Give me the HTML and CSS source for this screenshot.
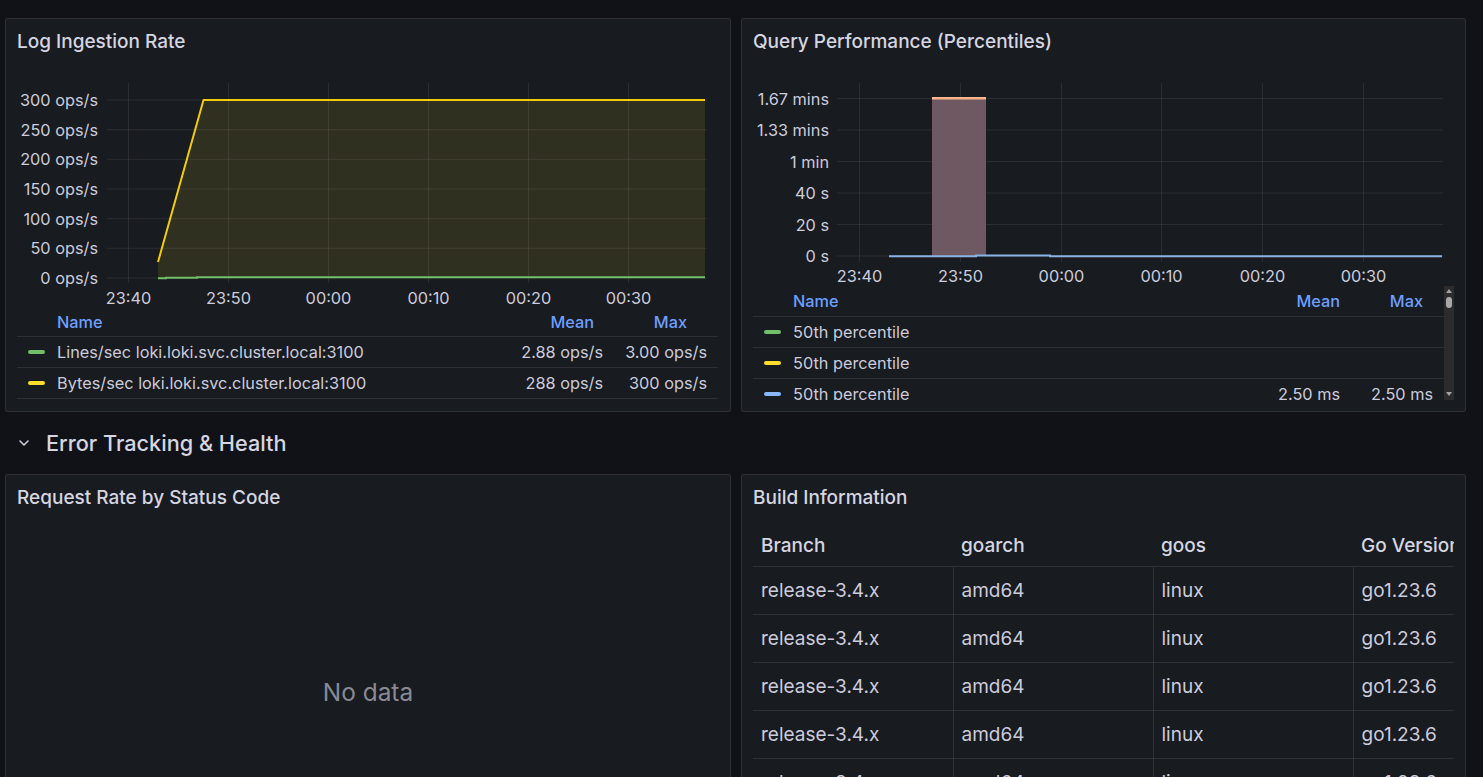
FILE: index.html
```html
<!DOCTYPE html>
<html>
<head>
<meta charset="utf-8">
<link rel="stylesheet" href="styles.css">
</head>
<body>
<div class="dash">
  <div class="grid">
    <section class="panel p-top">
      <header class="ph"><h2 class="title">Log Ingestion Rate</h2></header>
      <svg class="chart" width="724" height="244" viewBox="6 64 724 244">
        <g class="grid-lines">
          <line x1="107" x2="707" y1="100" y2="100"/>
          <line x1="107" x2="707" y1="129.7" y2="129.7"/>
          <line x1="107" x2="707" y1="159.3" y2="159.3"/>
          <line x1="107" x2="707" y1="189" y2="189"/>
          <line x1="107" x2="707" y1="218.7" y2="218.7"/>
          <line x1="107" x2="707" y1="248.3" y2="248.3"/>
          <line x1="107" x2="707" y1="278" y2="278"/>
          <line x1="128.5" x2="128.5" y1="83" y2="283"/>
          <line x1="228.5" x2="228.5" y1="83" y2="283"/>
          <line x1="328.5" x2="328.5" y1="83" y2="283"/>
          <line x1="428.5" x2="428.5" y1="83" y2="283"/>
          <line x1="528.5" x2="528.5" y1="83" y2="283"/>
          <line x1="628.5" x2="628.5" y1="83" y2="283"/>
        </g>
        <g class="ylab">
          <text x="98" y="100">300 ops/s</text>
          <text x="98" y="129.7">250 ops/s</text>
          <text x="98" y="159.3">200 ops/s</text>
          <text x="98" y="189">150 ops/s</text>
          <text x="98" y="218.7">100 ops/s</text>
          <text x="98" y="248.3">50 ops/s</text>
          <text x="98" y="278">0 ops/s</text>
        </g>
        <g class="xlab">
          <text x="128.5" y="298">23:40</text>
          <text x="228.5" y="298">23:50</text>
          <text x="328.5" y="298">00:00</text>
          <text x="428.5" y="298">00:10</text>
          <text x="528.5" y="298">00:20</text>
          <text x="628.5" y="298">00:30</text>
        </g>
        <polygon class="yfill" points="158,262 203.5,100 705,100 705,278 158,278"/>
        <polyline class="yline" points="158,262 203.5,100 705,100"/>
        <polyline class="gline" points="158,278.3 166,278.3 166,277.8 197,277.8 197,277.2 705,277.2"/>
      </svg>
      <div class="legend lg1">
        <div class="lrow lhead">
          <span class="lname">Name</span>
          <span class="lmean">Mean</span>
          <span class="lmax">Max</span>
        </div>
        <div class="lrow">
          <span class="lname"><i class="mk mk-green"></i>Lines/sec loki.loki.svc.cluster.local:3100</span>
          <span class="lmean">2.88 ops/s</span>
          <span class="lmax">3.00 ops/s</span>
        </div>
        <div class="lrow lrow-last">
          <span class="lname"><i class="mk mk-yellow"></i>Bytes/sec loki.loki.svc.cluster.local:3100</span>
          <span class="lmean">288 ops/s</span>
          <span class="lmax">300 ops/s</span>
        </div>
      </div>
    </section>

    <section class="panel p-top">
      <header class="ph"><h2 class="title">Query Performance (Percentiles)</h2></header>
      <svg class="chart" width="724" height="222" viewBox="742 64 724 222">
        <g class="grid-lines">
          <line x1="837" x2="1443" y1="98.5" y2="98.5"/>
          <line x1="837" x2="1443" y1="130" y2="130"/>
          <line x1="837" x2="1443" y1="161.5" y2="161.5"/>
          <line x1="837" x2="1443" y1="193" y2="193"/>
          <line x1="837" x2="1443" y1="224.5" y2="224.5"/>
          <line x1="837" x2="1443" y1="256" y2="256"/>
          <line x1="859.5" x2="859.5" y1="83" y2="262"/>
          <line x1="960.5" x2="960.5" y1="83" y2="262"/>
          <line x1="1061.5" x2="1061.5" y1="83" y2="262"/>
          <line x1="1161.5" x2="1161.5" y1="83" y2="262"/>
          <line x1="1262.5" x2="1262.5" y1="83" y2="262"/>
          <line x1="1363.5" x2="1363.5" y1="83" y2="262"/>
        </g>
        <g class="ylab">
          <text x="829" y="98.5">1.67 mins</text>
          <text x="829" y="130">1.33 mins</text>
          <text x="829" y="161.5">1 min</text>
          <text x="829" y="193">40 s</text>
          <text x="829" y="224.5">20 s</text>
          <text x="829" y="256">0 s</text>
        </g>
        <g class="xlab">
          <text x="859.5" y="276">23:40</text>
          <text x="960.5" y="276">23:50</text>
          <text x="1061.5" y="276">00:00</text>
          <text x="1161.5" y="276">00:10</text>
          <text x="1262.5" y="276">00:20</text>
          <text x="1363.5" y="276">00:30</text>
        </g>
        <rect class="bar" x="932" y="97.5" width="54" height="158.5"/>
        <rect class="bar-top" x="932" y="97" width="54" height="2.5"/>
        <polyline class="bline" points="889,256.3 976,256.3 976,255.5 1050,255.5 1050,256.3 1442,256.3"/>
      </svg>
      <div class="lwrap">
        <div class="legend lg2">
          <div class="lrow lhead">
            <span class="lname">Name</span>
            <span class="lmean">Mean</span>
            <span class="lmax">Max</span>
          </div>
          <div class="lrow">
            <span class="lname"><i class="mk mk-green"></i>50th percentile</span>
            <span class="lmean"></span>
            <span class="lmax"></span>
          </div>
          <div class="lrow">
            <span class="lname"><i class="mk mk-yellow"></i>50th percentile</span>
            <span class="lmean"></span>
            <span class="lmax"></span>
          </div>
          <div class="lrow">
            <span class="lname"><i class="mk mk-blue"></i>50th percentile</span>
            <span class="lmean">2.50 ms</span>
            <span class="lmax">2.50 ms</span>
          </div>
          <div class="lrow">
            <span class="lname"><i class="mk mk-red"></i>90th percentile</span>
            <span class="lmean"></span>
            <span class="lmax"></span>
          </div>
        </div>
        <div class="sbar">
          <span class="sb-up"></span>
          <span class="sb-thumb"></span>
          <span class="sb-down"></span>
        </div>
      </div>
    </section>
  </div>

  <div class="row-title">
    <svg class="chev" width="10" height="6" viewBox="0 0 10 6"><path d="M1 1 L5 5 L9 1"/></svg>
    <h1 class="row-name">Error Tracking &amp; Health</h1>
  </div>

  <div class="grid">
    <section class="panel p-bot">
      <header class="ph"><h2 class="title">Request Rate by Status Code</h2></header>
      <div class="nodata">No data</div>
    </section>
    <section class="panel p-bot">
      <header class="ph"><h2 class="title">Build Information</h2></header>
      <div class="twrap">
        <table class="btable">
          <thead>
            <tr><th>Branch</th><th>goarch</th><th>goos</th><th>Go Version</th></tr>
          </thead>
          <tbody>
            <tr><td>release-3.4.x</td><td>amd64</td><td>linux</td><td>go1.23.6</td></tr>
            <tr><td>release-3.4.x</td><td>amd64</td><td>linux</td><td>go1.23.6</td></tr>
            <tr><td>release-3.4.x</td><td>amd64</td><td>linux</td><td>go1.23.6</td></tr>
            <tr><td>release-3.4.x</td><td>amd64</td><td>linux</td><td>go1.23.6</td></tr>
            <tr><td>release-3.4.x</td><td>amd64</td><td>linux</td><td>go1.23.6</td></tr>
            <tr><td>release-3.4.x</td><td>amd64</td><td>linux</td><td>go1.23.6</td></tr>
          </tbody>
        </table>
      </div>
    </section>
  </div>
</div>
</body>
</html>
```

FILE: styles.css
```css
html, body {
  margin: 0;
  height: 100%;
  overflow: hidden;
}
body {
  background: #111217;
  font-family: Inter, "Noto Sans", sans-serif;
  color: #ccccdc;
}
.dash {
  padding: 18px 0 0 5px;
}
.grid {
  display: grid;
  grid-template-columns: 726px 725px;
  column-gap: 10px;
}
.panel {
  background: #181b1f;
  border: 1px solid rgba(204, 204, 220, 0.12);
  border-radius: 3px;
  box-sizing: border-box;
  overflow: hidden;
  display: flex;
  flex-direction: column;
}
.p-top { height: 394px; }
.p-bot { height: 400px; }
.ph {
  height: 44px;
  flex: none;
  display: flex;
  align-items: center;
  padding-left: 11px;
  padding-bottom: 1px;
}
.title {
  margin: 0;
  font-size: 19px;
  font-weight: 500;
  color: #d5d6e2;
}
.chart {
  display: block;
  flex: none;
}
.grid-lines line {
  stroke: #ccccdc;
  stroke-opacity: 0.1;
  stroke-width: 1;
}
.ylab text {
  fill: #ccccdc;
  font-size: 16.3px;
  text-anchor: end;
  dominant-baseline: central;
}
.xlab text {
  fill: #ccccdc;
  font-size: 16.3px;
  text-anchor: middle;
  dominant-baseline: central;
}
.yfill { fill: #fade2a; fill-opacity: 0.11; }
.yline { fill: none; stroke: #f2cc0c; stroke-width: 2; stroke-linejoin: round; }
.gline { fill: none; stroke: #73bf69; stroke-width: 2; }
.bar { fill: #6e5963; }
.bar-top { fill: #ffb48c; }
.bline { fill: none; stroke: #8ab4e6; stroke-width: 2; }

.legend {
  font-size: 16.3px;
}
.lg1 { margin: 0 12px 0 11px; }
.lrow {
  display: flex;
  align-items: center;
  height: 31px;
  border-top: 1px solid rgba(204, 204, 220, 0.12);
  box-sizing: border-box;
  white-space: nowrap;
}
.lrow-last { border-bottom: 1px solid rgba(204, 204, 220, 0.12); height: 32px; }
.lhead {
  border-top: none;
  height: 28px;
  color: #6e9fff;
  font-weight: 500;
}
.lname {
  flex: 1;
  display: flex;
  align-items: center;
  padding-left: 40px;
  position: relative;
}
.lmean, .lmax {
  text-align: right;
  padding-right: 11px;
  box-sizing: border-box;
  flex: none;
}
.lg1 .lmean { width: 110px; }
.lg1 .lmax { width: 104px; }
.lg1 .lhead .lmean { padding-right: 20px; }
.lg1 .lhead .lmax { padding-right: 31px; }
.lg2 .lmean { width: 110px; }
.lg2 .lmax { width: 93px; }
.lg2 .lhead .lmax { padding-right: 21px; }
.lg2 .lhead { height: 30px; }

.mk {
  position: absolute;
  left: 11px;
  top: 50%;
  width: 17px;
  height: 4px;
  margin-top: -2px;
  border-radius: 2px;
}
.mk-green { background: #73bf69; }
.mk-yellow { background: #fade2a; }
.mk-blue { background: #8ab8ff; }
.mk-red { background: #f2495c; }

.lwrap {
  display: flex;
  margin: 0 11px 0 11px;
  height: 114px;
  overflow: hidden;
}
.lg2 { flex: 1; }
.sbar {
  width: 10px;
  height: 115px;
  margin-top: -1px;
  background: #2c2c2e;
  position: relative;
  flex: none;
}
.sb-up, .sb-down {
  position: absolute;
  left: 2px;
  width: 0;
  height: 0;
  border-left: 3px solid transparent;
  border-right: 3px solid transparent;
}
.sb-up { top: 4px; border-bottom: 4px solid #a3a3a3; }
.sb-down { bottom: 4px; border-top: 4px solid #a3a3a3; }
.sb-thumb {
  position: absolute;
  left: 2px;
  top: 12px;
  width: 6px;
  height: 11px;
  border-radius: 3px;
  background: #a8a8a8;
}

.row-title {
  height: 62px;
  display: flex;
  align-items: center;
  padding-left: 14px;
}
.chev {
  flex: none;
  margin-right: 17px;
}
.chev path {
  fill: none;
  stroke: #ccccdc;
  stroke-width: 1.6;
  stroke-linecap: round;
  stroke-linejoin: round;
}
.row-name {
  margin: 0;
  font-size: 21.7px;
  font-weight: 500;
  color: #d5d6e2;
}

.nodata {
  height: 344px;
  flex: none;
  display: flex;
  align-items: center;
  justify-content: center;
  font-size: 24.4px;
  color: rgba(204, 204, 220, 0.65);
}

.twrap {
  margin: 6px 11px 0 11px;
  overflow: hidden;
}
.btable {
  border-collapse: collapse;
  table-layout: fixed;
  width: 800px;
  font-size: 19px;
}
.btable th, .btable td {
  width: 200px;
  text-align: left;
  padding: 0 0 0 8px;
  white-space: nowrap;
  overflow: hidden;
  box-sizing: border-box;
}
.btable th {
  height: 40px;
  font-weight: 500;
  color: #d5d6e2;
  border-bottom: 1px solid rgba(204, 204, 220, 0.12);
}
.btable td {
  height: 48px;
  border-bottom: 1px solid rgba(204, 204, 220, 0.12);
  border-right: 1px solid rgba(204, 204, 220, 0.12);
}
```
